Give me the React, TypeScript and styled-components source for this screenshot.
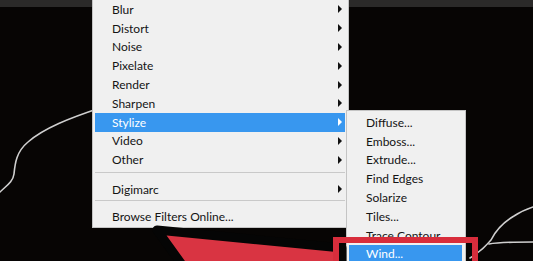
import React from 'react';
import styled, { createGlobalStyle } from 'styled-components';

const GlobalStyle = createGlobalStyle`
    html, body {
        margin: 0;
        padding: 0;
        background-color: #070504;
        overflow: hidden;
    }
`;

const Screen = styled.div`
    position: relative;
    width: 533px;
    height: 261px;
    overflow: hidden;
    background-color: #070504;
    display: flex;
    flex-direction: column;
    font-family: Lato, "Open Sans", sans-serif;
`;

const TopBar = styled.div`
    height: 7px;
    flex-shrink: 0;
    background-color: #2b2a29;
`;

const Canvas = styled.div`
    position: relative;
    flex: 1;
    background-color: #070504;
`;

const Drawing = styled.svg`
    position: absolute;
    left: 0;
    top: -7px;
    width: 533px;
    height: 261px;
`;

const Menu = styled.div<{ $left: number; $top: number; $width: number }>`
    position: absolute;
    left: ${p => p.$left}px;
    top: ${p => p.$top}px;
    width: ${p => p.$width}px;
    box-sizing: border-box;
    display: flex;
    flex-direction: column;
    background-color: #f0f0f0;
    border: 1px solid #c4c4c4;
    padding: 2px 3px 1px 2px;
`;

const MainMenu = styled(Menu)`
    border-top: none;
    padding-top: 0;
`;

const Row = styled.div<{ $active?: boolean }>`
    position: relative;
    display: flex;
    align-items: center;
    height: 18.8px;
    padding-left: 17px;
    font-size: 12px;
    color: ${p => (p.$active ? '#ffffff' : '#141414')};
    background-color: ${p => (p.$active ? '#3897ef' : 'transparent')};
    white-space: nowrap;
`;

const Arrow = styled.span<{ $active?: boolean }>`
    position: absolute;
    right: 3px;
    top: 50%;
    margin-top: -4px;
    width: 0;
    height: 0;
    border-top: 4px solid transparent;
    border-bottom: 4px solid transparent;
    border-left: 4px solid ${p => (p.$active ? '#ffffff' : '#111111')};
`;

const Separator = styled.div<{ $above: number; $below: number }>`
    height: 1px;
    margin: ${p => p.$above}px 0 ${p => p.$below}px;
    background-color: #c9c9c9;
`;

const HighlightBox = styled.div`
    position: absolute;
    left: 333px;
    top: 237px;
    width: 145px;
    height: 40px;
    box-sizing: border-box;
    border: 6px solid #d82d3c;
`;

const Overlay = styled.svg`
    position: absolute;
    left: 0;
    top: 0;
    width: 533px;
    height: 261px;
`;

type Item = { label: string; sub?: boolean; active?: boolean };

const filters: Item[] = [
    { label: 'Blur', sub: true },
    { label: 'Distort', sub: true },
    { label: 'Noise', sub: true },
    { label: 'Pixelate', sub: true },
    { label: 'Render', sub: true },
    { label: 'Sharpen', sub: true },
    { label: 'Stylize', sub: true, active: true },
    { label: 'Video', sub: true },
    { label: 'Other', sub: true },
];

const stylize: Item[] = [
    { label: 'Diffuse...' },
    { label: 'Emboss...' },
    { label: 'Extrude...' },
    { label: 'Find Edges' },
    { label: 'Solarize' },
    { label: 'Tiles...' },
    { label: 'Trace Contour' },
    { label: 'Wind...', active: true },
];

const MenuRow: React.FC<{ item: Item }> = ({ item }) => (
    <Row $active={item.active}>
        {item.label}
        {item.sub && <Arrow $active={item.active} />}
    </Row>
);

const App: React.FC = () => {
    return (
        <Screen>
            <GlobalStyle />
            <TopBar />
            <Canvas>
                {/* strokes painted on the document */}
                <Drawing viewBox="0 0 533 261">
                    <g fill="none" stroke="#cfcfcf" strokeWidth="1.6" strokeLinecap="round">
                        <path d="M0,192 C6,186 13,182 14,174 C15,164 16,152 28,142 C44,128 70,118 100,108" />
                        <path d="M470,258 C480,252 486,246 491,240 C496,230 504,222 514,216 C520,212 527,209 533,207" />
                        <path d="M489,244 C500,242 520,242 533,242" />
                    </g>
                </Drawing>
            </Canvas>

            <MainMenu $left={92} $top={0} $width={257}>
                {filters.map(item => (
                    <MenuRow key={item.label} item={item} />
                ))}
                <Separator $above={2.5} $below={7} />
                <MenuRow item={{ label: 'Digimarc', sub: true }} />
                <Separator $above={1.5} $below={6} />
                <MenuRow item={{ label: 'Browse Filters Online...' }} />
            </MainMenu>

            <Menu $left={346} $top={110} $width={120}>
                {stylize.map(item => (
                    <MenuRow key={item.label} item={item} />
                ))}
            </Menu>

            {/* tutorial annotation */}
            <Overlay viewBox="0 0 533 261">
                <polygon
                    points="157,230 342,248 342,266 183,266"
                    fill="#d93442"
                    stroke="#050505"
                    strokeWidth="9"
                    strokeLinejoin="round"
                />
            </Overlay>
            <HighlightBox />
        </Screen>
    );
};

export default App;
